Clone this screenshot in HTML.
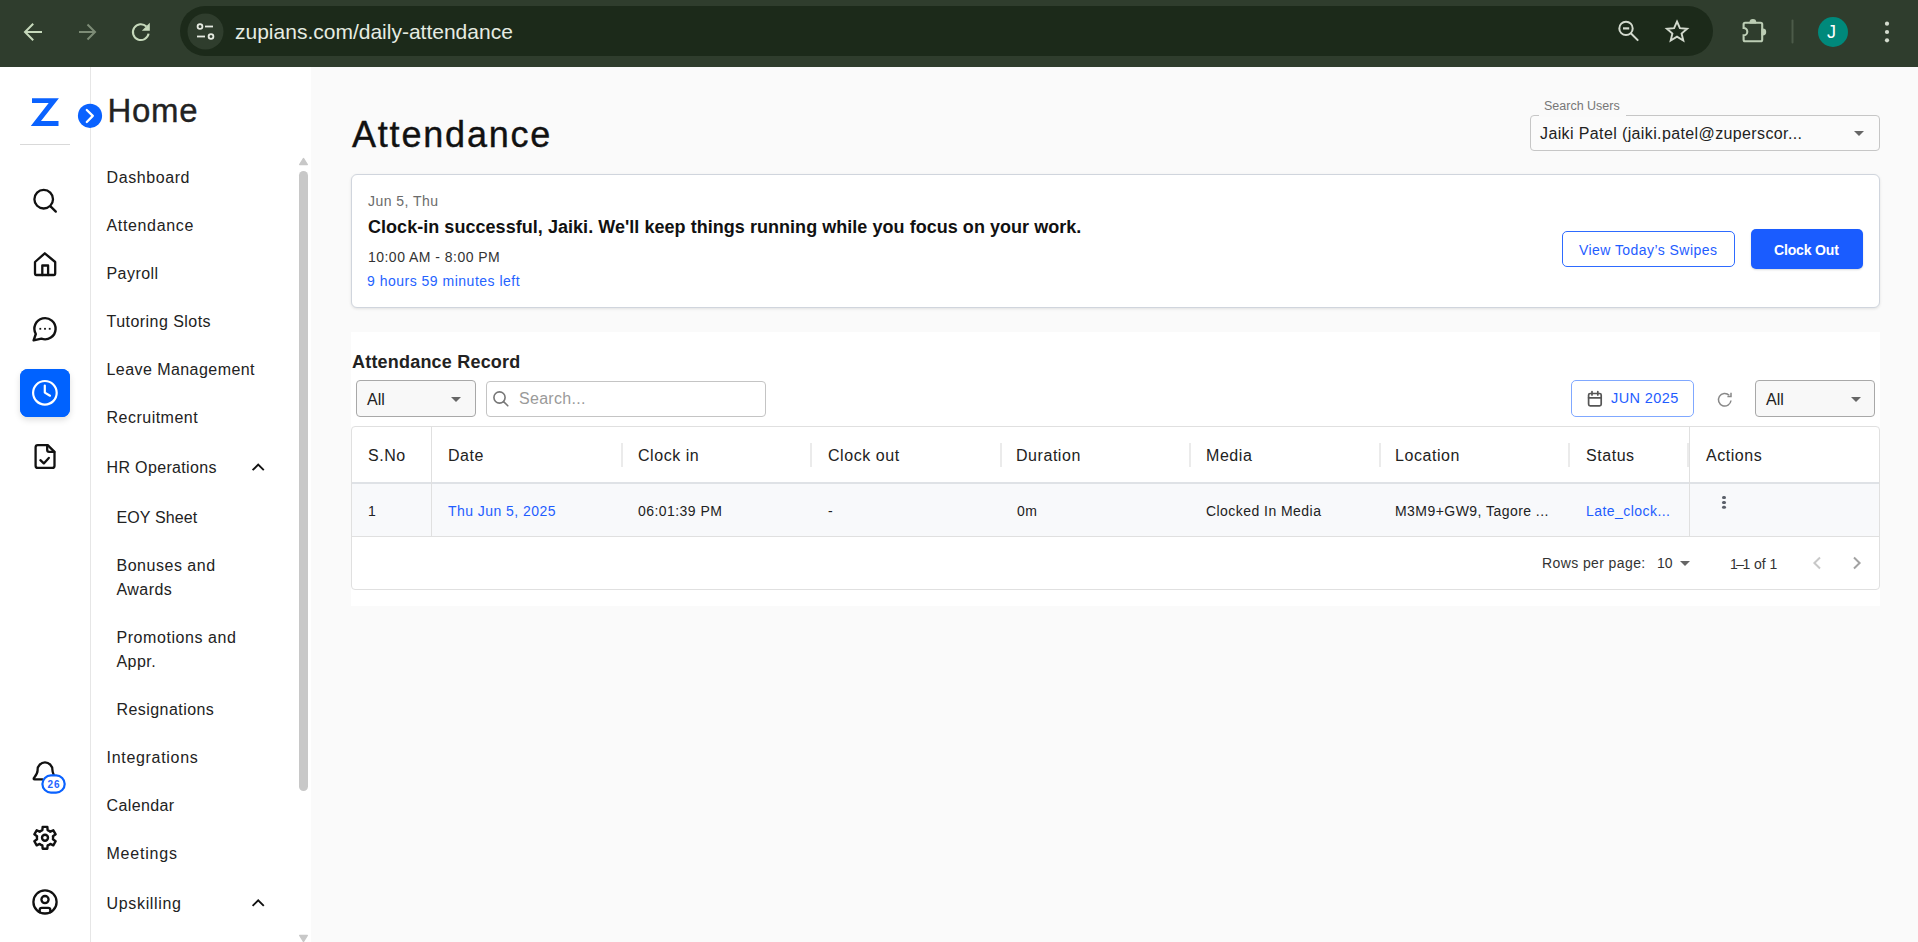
<!DOCTYPE html>
<html><head><meta charset="utf-8">
<style>
*{box-sizing:border-box;margin:0;padding:0}
html,body{width:1918px;height:942px;overflow:hidden;background:#fafafa;font-family:"Liberation Sans",sans-serif;color:#1f1f1f}
.abs{position:absolute}
#chrome{position:absolute;left:0;top:0;width:1918px;height:67px;background:#2f3d2d}
#url{position:absolute;left:180px;top:6px;width:1533px;height:50px;border-radius:25px;background:#1c2a1a}
#rail{position:absolute;left:0;top:67px;width:91px;height:875px;background:#fff;border-right:1px solid #e6e6e6;z-index:2}
#nav{position:absolute;left:91px;top:67px;width:220px;height:875px;background:#fff}
.ni{position:absolute;left:15.5px;font-size:16px;color:#222;white-space:nowrap;line-height:1}
.sub{left:25.5px}
#main{position:absolute;left:311px;top:67px;width:1607px;height:875px;background:#fafafa}
.t{position:absolute;white-space:nowrap;line-height:1}
.tri{width:0;height:0;border-left:5px solid transparent;border-right:5px solid transparent;border-top:5px solid #666}
</style></head><body>
<div id="chrome">
  <div id="url"></div>
  <svg class="abs" style="left:0;top:0" width="1918" height="67" viewBox="0 0 1918 67">
    <g fill="none" stroke="#c6d9bb" stroke-width="2" stroke-linecap="square">
      <path d="M41 32H26M32.5 24.5L25 32l7.5 7.5" />
    </g>
    <g fill="none" stroke="#7d8c76" stroke-width="2">
      <path d="M79 32H94M87.5 24.5L95 32l-7.5 7.5" />
    </g>
    <path d="M146.4 26.5A7.9 7.9 0 1 0 148.6 33.6" fill="none" stroke="#c6d9bb" stroke-width="2.1"/>
    <path d="M149.8 22.8V30.8H141.8Z" fill="#c6d9bb"/>
    <circle cx="205.5" cy="31.5" r="18" fill="#2f3d2d"/>
    <g fill="none" stroke="#e6ebe2" stroke-width="1.8">
      <circle cx="200" cy="26.5" r="2.4"/><path d="M205 26.5h8"/>
      <circle cx="211" cy="36.5" r="2.4"/><path d="M197 36.5h8"/>
    </g>
    <g fill="none" stroke="#d3dace" stroke-width="2">
      <circle cx="1626" cy="28.4" r="6.7"/><path d="M1630.8 33.2l7.4 7.4"/><path d="M1623 28.4h6.2" stroke-width="2.2"/>
    </g>
    <path d="M1677 21.5l2.9 6.6 7.2.6-5.5 4.8 1.7 7-6.3-3.8-6.3 3.8 1.7-7-5.5-4.8 7.2-.6z" fill="none" stroke="#d3dace" stroke-width="1.9" stroke-linejoin="miter"/>
    <path d="M1745.1 22.7H1760.7Q1762.2 22.7 1762.2 24.2V39.8Q1762.2 41.3 1760.7 41.3H1745.1Q1743.6 41.3 1743.6 39.8V35.4A3.7 3.7 0 0 0 1743.6 28V24.2Q1743.6 22.7 1745.1 22.7Z" fill="none" stroke="#bccdb4" stroke-width="2.1"/>
    <path d="M1749.5 22.4A3.4 3.4 0 0 1 1756.3 22.4Z" fill="#bccdb4"/><path d="M1762.8 28.6A3.4 3.4 0 0 1 1762.8 35.4Z" fill="#bccdb4"/><rect x="1749.5" y="22" width="6.8" height="1.5" fill="#bccdb4"/><rect x="1761.5" y="28.6" width="1.5" height="6.8" fill="#bccdb4"/>
    <rect x="1791.5" y="19.5" width="2" height="24" rx="1" fill="#4c5b49"/>
    <circle cx="1833" cy="32" r="15" fill="#00897b"/>
    <g fill="#d5dccf"><circle cx="1887" cy="23.7" r="2.1"/><circle cx="1887" cy="32" r="2.1"/><circle cx="1887" cy="40.3" r="2.1"/></g>
  </svg>
  <div class="t" style="left:1827px;top:23px;font-size:18px;color:#fff">J</div>
  <div class="t" style="left:235px;top:21px;font-size:21px;color:#e6ece2">zupians.com/daily-attendance</div>
</div>
<div id="rail">
  <div class="abs" style="left:20px;top:302px;width:50px;height:48px;border-radius:8px;background:#0062ff;box-shadow:0 3px 6px rgba(0,0,0,0.13)"></div>
  <svg class="abs" style="left:0;top:-67px" width="110" height="942" viewBox="0 0 110 942">
    <path d="M32 98.2H58.9L41 121.1H58.5V125.9H30.8L48.7 103H32Z" fill="#0a62ff"/>
    <rect x="20" y="144" width="50" height="1" fill="#d9d9d9"/>
    <g fill="none" stroke="#111" stroke-width="2.3" stroke-linecap="round" stroke-linejoin="round">
      <circle cx="43.7" cy="199.2" r="9.3"/><path d="M50.8 206.6l5 5"/>
      <path d="M35 262L44.8 253.3L55.2 262V273.6Q55.2 275 53.8 275H36.4Q35 275 35 273.6Z"/><path d="M42.3 275V265.5H48.1V275"/>
      <path d="M41.4 338.7A10.6 10.6 0 1 0 35.8 334L33.6 340.4Z" stroke-width="2.4"/>
      <path d="M35.6 447.3Q35.6 445.1 37.8 445.1H47.7L54.5 451.9V465.7Q54.5 467.9 52.3 467.9H37.8Q35.6 467.9 35.6 465.7Z"/><path d="M47.2 445.3V450Q47.2 451.9 49.1 451.9H54.3"/><path d="M40.4 460.2L43.8 463.4L48.8 457.9"/>
      <path d="M42.5 779.3H34.6Q33.2 779.3 34 777.9Q37.6 773.8 37.6 770.3V769.8A7.4 7.4 0 0 1 52.4 769.8Q52.5 772.3 53.6 774.6"/>
    </g>
    <g fill="#111"><rect x="39.4" y="327.9" width="1.8" height="1.8"/><rect x="44.1" y="327.9" width="1.8" height="1.8"/><rect x="48.8" y="327.9" width="1.8" height="1.8"/></g>
    <rect x="20" y="369" width="50" height="48" rx="8" fill="#0062ff"/>
    <g fill="none" stroke="#fff" stroke-width="2.2" stroke-linecap="round" stroke-linejoin="round">
      <circle cx="44.9" cy="392.8" r="11.8"/><path d="M44.8 385.6v7l5.2 3.1"/>
    </g>
    <rect x="42.4" y="775.4" width="22.3" height="17.2" rx="8.6" fill="#fff" stroke="#0a62ff" stroke-width="2.2"/>
    <g fill="none" stroke="#111" stroke-width="2.4" stroke-linejoin="round">
      <path d="M40.95 830.79 L42.36 830.14 L42.67 826.84 L47.33 826.84 L47.64 830.14 L49.05 830.79 L50.31 831.69 L53.32 830.31 L55.65 834.34 L52.95 836.25 L53.10 837.80 L52.95 839.35 L55.65 841.26 L53.32 845.29 L50.31 843.91 L49.05 844.81 L47.64 845.46 L47.33 848.76 L42.67 848.76 L42.36 845.46 L40.95 844.81 L39.69 843.91 L36.68 845.29 L34.35 841.26 L37.05 839.35 L36.90 837.80 L37.05 836.25 L34.35 834.34 L36.68 830.31 L39.69 831.69Z"/><circle cx="45" cy="837.8" r="3"/>
    </g>
    <g fill="none" stroke="#111" stroke-width="2.3" stroke-linecap="round" stroke-linejoin="round">
      <circle cx="45" cy="901.9" r="11.6"/><circle cx="45" cy="899.6" r="3.6"/><path d="M39.7 912.3V910Q39.7 907.9 41.8 907.9H48.2Q50.3 907.9 50.3 910V912.3"/>
    </g>
    <circle cx="90" cy="115.8" r="12.1" fill="#0a62ff"/>
    <path d="M86.8 110l6 5.9-6 6.1" fill="none" stroke="#fff" stroke-width="2.3" stroke-linecap="round" stroke-linejoin="round"/>
  </svg>
  <div class="t" style="left:47.6px;top:713px;font-size:10px;font-weight:bold;color:#2563ff;letter-spacing:0.9px">26</div>
</div>
<div id="nav">
  <svg class="abs" style="left:0;top:0" width="220" height="875" viewBox="91 67 220 875">
    <g fill="none" stroke="#111" stroke-width="1.9" stroke-linecap="butt" stroke-linejoin="miter">
      <path d="M252.6 470.2l5.6-5.6 5.6 5.6"/>
      <path d="M252.6 905.9l5.6-5.6 5.6 5.6"/>
    </g>
    <rect x="299" y="171" width="9" height="620" rx="4.5" fill="#c8c8c8"/>
    <path d="M299.6 164.6h7.8l-3.9-6.2z" fill="#c8c8c8" stroke="#c8c8c8" stroke-width="1.2" stroke-linejoin="round"/>
    <path d="M299.6 935.4h7.8l-3.9 6.2z" fill="#c8c8c8" stroke="#c8c8c8" stroke-width="1.2" stroke-linejoin="round"/>
  </svg>
  <div class="t" style="left:16.5px;top:27px;font-size:33px;letter-spacing:0.7px;color:#222;-webkit-text-stroke:0.35px #222">Home</div>
  <div class="ni" style="top:103px;letter-spacing:0.59px">Dashboard</div>
  <div class="ni" style="top:151px;letter-spacing:0.65px">Attendance</div>
  <div class="ni" style="top:199px;letter-spacing:0.45px">Payroll</div>
  <div class="ni" style="top:247px;letter-spacing:0.46px">Tutoring Slots</div>
  <div class="ni" style="top:295px;letter-spacing:0.44px">Leave Management</div>
  <div class="ni" style="top:343px;letter-spacing:0.49px">Recruitment</div>
  <div class="ni" style="top:393px;letter-spacing:0.35px">HR Operations</div>
  <div class="ni sub" style="top:443px;letter-spacing:0.11px">EOY Sheet</div>
  <div class="ni sub" style="top:491px;letter-spacing:0.52px">Bonuses and</div>
  <div class="ni sub" style="top:515px;letter-spacing:0.45px">Awards</div>
  <div class="ni sub" style="top:563px;letter-spacing:0.56px">Promotions and</div>
  <div class="ni sub" style="top:587px;letter-spacing:0.45px">Appr.</div>
  <div class="ni sub" style="top:635px;letter-spacing:0.44px">Resignations</div>
  <div class="ni" style="top:683px;letter-spacing:0.70px">Integrations</div>
  <div class="ni" style="top:731px;letter-spacing:0.38px">Calendar</div>
  <div class="ni" style="top:779px;letter-spacing:0.78px">Meetings</div>
  <div class="ni" style="top:829px;letter-spacing:0.67px">Upskilling</div>
</div>
<div id="main">
  <div class="t" style="left:41px;top:50px;font-size:36px;letter-spacing:1.8px;color:#111;-webkit-text-stroke:0.4px #111">Attendance</div>
  <!-- search users -->
  <div class="abs" style="left:1219px;top:48px;width:350px;height:36px;border:1px solid #c6c6c6;border-radius:4px;background:#fbfbfb"></div>
  <div class="abs" style="left:1228px;top:47px;width:87px;height:3px;background:#fafafa"></div>
  <div class="t" style="left:1233px;top:33px;font-size:12.5px;color:#777;letter-spacing:0px">Search Users</div>
  <div class="t" style="left:1229px;top:59px;font-size:16px;color:#222;letter-spacing:0.38px">Jaiki Patel (jaiki.patel@zuperscor...</div>
  <div class="abs tri" style="left:1543px;top:64px"></div>
  <!-- card -->
  <div class="abs" style="left:40px;top:107px;width:1529px;height:134px;background:#fff;border:1px solid #d0d5dd;border-radius:6px;box-shadow:0 1px 3px rgba(0,0,0,0.10)"></div>
  <div class="t" style="left:57px;top:127px;font-size:14px;color:#6b6b6b;letter-spacing:0.45px">Jun 5, Thu</div>
  <div class="t" style="left:57px;top:151px;letter-spacing:0.04px;font-size:18px;font-weight:bold;color:#111">Clock-in successful, Jaiki. We'll keep things running while you focus on your work.</div>
  <div class="t" style="left:57px;top:183px;font-size:14px;color:#333;letter-spacing:0.47px">10:00 AM - 8:00 PM</div>
  <div class="t" style="left:56px;top:207px;font-size:14px;color:#2563ff;letter-spacing:0.5px">9 hours 59 minutes left</div>
  <div class="abs" style="left:1251px;top:164px;width:173px;height:36px;border:1px solid #2e6bff;border-radius:5px;background:#fff"></div>
  <div class="t" style="left:1268px;top:175.5px;font-size:14px;color:#1f5dff;letter-spacing:0.44px">View Today’s Swipes</div>
  <div class="abs" style="left:1440px;top:162px;width:112px;height:40px;border-radius:5px;background:#1a5cff;box-shadow:0 1px 2px rgba(0,0,0,0.15)"></div>
  <div class="t" style="left:1463px;top:176px;font-size:14px;font-weight:bold;letter-spacing:-0.15px;color:#fff">Clock Out</div>
  <!-- section -->
  <div class="abs" style="left:40px;top:265px;width:1529px;height:274px;background:#fff"></div>
  <div class="t" style="left:41px;top:286px;font-size:18px;font-weight:bold;color:#222;letter-spacing:0.2px">Attendance Record</div>
  <div class="abs" style="left:45px;top:313px;width:120px;height:37px;border:1px solid #a8a8a8;border-radius:4px;background:#f8f8f8"></div>
  <div class="t" style="left:56px;top:325px;font-size:16px;color:#222">All</div>
  <div class="abs tri" style="left:140px;top:330px"></div>
  <div class="abs" style="left:175px;top:314px;width:280px;height:36px;border:1px solid #c4c4c4;border-radius:4px;background:#fff"></div>
  <div class="t" style="left:208px;top:324px;font-size:16px;color:#9a9a9a;letter-spacing:0.3px">Search...</div>
  <div class="abs" style="left:1260px;top:313px;width:123px;height:37px;border:1px solid #80a8ff;border-radius:5px;background:#fff"></div>
  <div class="t" style="left:1300px;top:324px;font-size:14.5px;color:#1f5dff;letter-spacing:0.4px">JUN 2025</div>
  <div class="abs" style="left:1444px;top:313px;width:120px;height:37px;border:1px solid #a8a8a8;border-radius:4px;background:#f8f8f8"></div>
  <div class="t" style="left:1455px;top:325px;font-size:16px;color:#222">All</div>
  <div class="abs tri" style="left:1540px;top:330px"></div>
  <!-- table -->
  <div class="abs" style="left:40px;top:359px;width:1529px;height:164px;border:1px solid #e0e0e0;border-radius:4px;background:#fff;overflow:hidden">
    <div class="abs" style="left:0;top:55px;width:1527px;height:55px;background:#f8f9fb;border-top:2px solid #dfe2e6;border-bottom:1px solid #e0e0e0"></div>
    <div class="abs" style="left:79px;top:0;width:1px;height:110px;background:#e0e0e0"></div>
    <div class="abs" style="left:1337px;top:0;width:1px;height:110px;background:#e0e0e0"></div>
  </div>
  <div class="t" style="left:57px;top:381px;font-size:16px;color:#222;letter-spacing:0.55px">S.No</div>
  <div class="t" style="left:137px;top:381px;font-size:16px;color:#222;letter-spacing:0.55px">Date</div>
  <div class="t" style="left:327px;top:381px;font-size:16px;color:#222;letter-spacing:0.55px">Clock in</div>
  <div class="t" style="left:517px;top:381px;font-size:16px;color:#222;letter-spacing:0.55px">Clock out</div>
  <div class="t" style="left:705px;top:381px;font-size:16px;color:#222;letter-spacing:0.55px">Duration</div>
  <div class="t" style="left:895px;top:381px;font-size:16px;color:#222;letter-spacing:0.55px">Media</div>
  <div class="t" style="left:1084px;top:381px;font-size:16px;color:#222;letter-spacing:0.55px">Location</div>
  <div class="t" style="left:1275px;top:381px;font-size:16px;color:#222;letter-spacing:0.55px">Status</div>
  <div class="t" style="left:1395px;top:381px;font-size:16px;color:#222;letter-spacing:0.55px">Actions</div>
  <div class="t" style="left:57px;top:436.5px;font-size:14px;color:#222;letter-spacing:0.45px">1</div>
  <div class="t" style="left:137px;top:437px;font-size:14px;color:#1f5dff;letter-spacing:0.45px">Thu Jun 5, 2025</div>
  <div class="t" style="left:327px;top:437px;font-size:14px;color:#222;letter-spacing:0.45px">06:01:39 PM</div>
  <div class="t" style="left:517px;top:437px;font-size:14px;color:#222;letter-spacing:0.45px">-</div>
  <div class="t" style="left:706px;top:437px;font-size:14px;color:#222;letter-spacing:0.45px">0m</div>
  <div class="t" style="left:895px;top:437px;font-size:14px;color:#222;letter-spacing:0.45px">Clocked In Media</div>
  <div class="t" style="left:1084px;top:437px;font-size:14px;color:#222;letter-spacing:0.45px">M3M9+GW9, Tagore ...</div>
  <div class="t" style="left:1275px;top:437px;font-size:14px;color:#1f5dff;letter-spacing:0.45px">Late_clock...</div>
  <div class="abs" style="left:310px;top:376px;width:2px;height:24px;background:#ebebeb"></div>
  <div class="abs" style="left:499px;top:376px;width:2px;height:24px;background:#ebebeb"></div>
  <div class="abs" style="left:689px;top:376px;width:2px;height:24px;background:#ebebeb"></div>
  <div class="abs" style="left:878px;top:376px;width:2px;height:24px;background:#ebebeb"></div>
  <div class="abs" style="left:1068px;top:376px;width:2px;height:24px;background:#ebebeb"></div>
  <div class="abs" style="left:1257px;top:376px;width:2px;height:24px;background:#ebebeb"></div>
  <div class="abs" style="left:1376px;top:376px;width:2px;height:24px;background:#ebebeb"></div>
  <div class="abs" style="left:1411.1px;top:428.7px;width:3.7px;height:3.7px;border-radius:50%;background:#5b606a;box-shadow:0 4.9px 0 #5b606a,0 9.8px 0 #5b606a"></div>
  <div class="t" style="left:1231px;top:489px;font-size:14px;color:#333;letter-spacing:0.4px">Rows per page:</div>
  <div class="t" style="left:1346px;top:489px;font-size:14px;color:#333;letter-spacing:0px">10</div>
  <div class="abs tri" style="left:1369px;top:494px"></div>
  <div class="t" style="left:1419px;top:490px;font-size:14px;color:#333;letter-spacing:0px"><span style="letter-spacing:-1.6px">1–</span>1 of 1</div>
  <svg class="abs" style="left:0;top:0" width="1607" height="875" viewBox="311 67 1607 875">
    <g fill="none" stroke="#777" stroke-width="1.6" stroke-linecap="round">
      <circle cx="499.5" cy="397.5" r="5.6"/><path d="M503.6 401.6l4.2 4.2"/>
    </g>
    <g fill="none" stroke="#555" stroke-width="1.7" stroke-linejoin="round">
      <rect x="1588.6" y="393.5" width="12.6" height="12.3" rx="1.6"/><path d="M1588.6 397.8h12.6M1592 391.6v3.4M1597.8 391.6v3.4" stroke-linecap="round"/>
    </g>
    <g fill="none" stroke="#888" stroke-width="1.5">
      <path d="M1731 400.5a6.3 6.3 0 1 1-1.8-5.2"/><path d="M1731 392.8v3.6h-3.6"/>
    </g>
    <g fill="none" stroke="#c8c8c8" stroke-width="2"><path d="M1820 557.5l-5.6 5.5 5.6 5.5"/></g>
    <g fill="none" stroke="#a2a2a2" stroke-width="2"><path d="M1854 557.5l5.6 5.5-5.6 5.5"/></g>
  </svg>
</div>
</body></html>
